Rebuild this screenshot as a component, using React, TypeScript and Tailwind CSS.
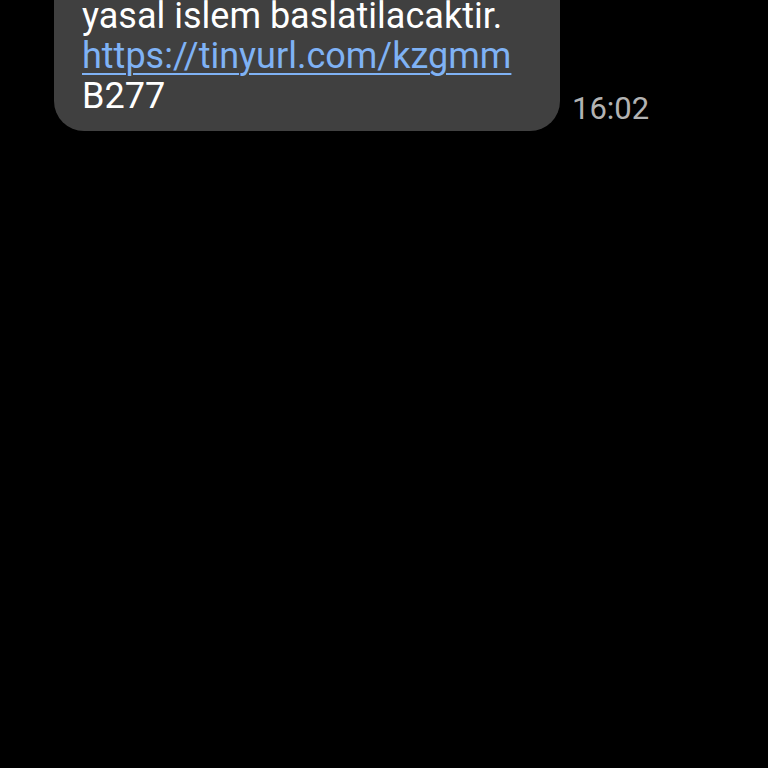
export default function App() {
  return (
    <div className="w-[768px] h-[768px] bg-black overflow-hidden" style={{ fontFamily: 'Roboto, "Noto Sans", sans-serif' }}>
      <div className="flex items-end gap-3 pl-[54px] -mt-[4px]">
        <div className="w-[506px] bg-[#404040] rounded-b-[30px] pl-7 pr-5 pb-[15px] text-[36px] leading-[40px] text-white">
          <div>yasal islem baslatilacaktir.</div>
          <div>
            <a className="text-[#7fb2f5] underline decoration-2 underline-offset-[5px]">https://tinyurl.com/kzgmm</a>
          </div>
          <div>B277</div>
        </div>
        <div className="text-[31px] leading-[36px] text-[#b3b3b3] pb-[4px]">16:02</div>
      </div>
    </div>
  );
}
